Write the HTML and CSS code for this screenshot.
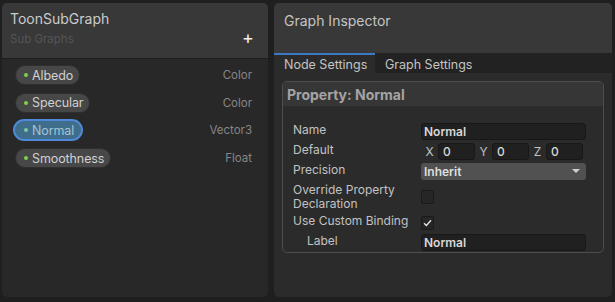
FILE: index.html
```html
<!DOCTYPE html>
<html>
  <head>
    <link rel="stylesheet" href="styles.css">
  </head>
  <body>
    <div class="window">
      <div class="blackboard">
        <div class="bb-header">
          <div class="bb-title">ToonSubGraph</div>
          <div class="bb-sub">
            <span>Sub Graphs</span>
            <span class="add-button">+</span>
          </div>
        </div>
        <div class="bb-list">
          <div class="bb-row">
            <div class="pill"><span class="dot"></span>Albedo</div>
            <div class="bb-type">Color</div>
          </div>
          <div class="bb-row">
            <div class="pill"><span class="dot"></span>Specular</div>
            <div class="bb-type">Color</div>
          </div>
          <div class="bb-row">
            <div class="pill selected"><span class="dot"></span>Normal</div>
            <div class="bb-type">Vector3</div>
          </div>
          <div class="bb-row">
            <div class="pill"><span class="dot"></span>Smoothness</div>
            <div class="bb-type">Float</div>
          </div>
        </div>
      </div>

      <div class="inspector">
        <div class="insp-header">Graph Inspector</div>
        <div class="tabs">
          <div class="tab active">Node Settings</div>
          <div class="tab">Graph Settings</div>
        </div>
        <div class="insp-body">
          <div class="prop-box">
            <div class="prop-title">Property: Normal</div>
            <div class="prop-grid">
              <div class="label">Name</div>
              <div class="field-cell"><div class="field">Normal</div></div>

              <div class="label">Default</div>
              <div class="field-cell vec">
                <span class="axis">X</span><div class="field small">0</div>
                <span class="axis">Y</span><div class="field small">0</div>
                <span class="axis">Z</span><div class="field small">0</div>
              </div>

              <div class="label">Precision</div>
              <div class="field-cell">
                <div class="dropdown">Inherit<span class="arrow"></span></div>
              </div>

              <div class="label two-line">Override Property<br>Declaration</div>
              <div class="field-cell"><div class="checkbox"></div></div>

              <div class="label">Use Custom Binding</div>
              <div class="field-cell">
                <div class="checkbox">
                  <svg width="9" height="8" viewBox="0 0 9 8"><path d="M1 4.2 L3.4 6.5 L8 1.3" fill="none" stroke="#e6e6e6" stroke-width="1.3"/></svg>
                </div>
              </div>

              <div class="label indent">Label</div>
              <div class="field-cell"><div class="field">Normal</div></div>
            </div>
          </div>
        </div>
      </div>
    </div>
  </body>
</html>
```

FILE: styles.css
```css
body {
    margin: 0;
    background-color: #1f1f1f;
    font-family: 'Inter', 'Noto Sans', sans-serif;
    color: #c4c4c4;
}
.window {
    display: flex;
    gap: 6px;
    padding: 3px 3px 5px 2px;
    height: 294px;
}

/* left: blackboard */
.blackboard {
    width: 266px;
    background-color: #282828;
    border-radius: 5px;
    overflow: hidden;
    display: flex;
    flex-direction: column;
}
.bb-header {
    height: 56px;
    background-color: #383838;
    border-bottom: 1px solid #1d1d1d;
    padding: 0 14px 0 8px;
    box-sizing: border-box;
}
.bb-title {
    font-size: 14px;
    padding-top: 6px;
    height: 20px;
    line-height: 20px;
    color: #cbcbcb;
}
.bb-sub {
    display: flex;
    justify-content: space-between;
    align-items: center;
    font-size: 11.5px;
    color: #555555;
    margin-top: 3px;
}
.add-button {
    color: #f0f0f0;
    font-size: 18px;
    line-height: 16px;
    margin-top: -3px;
}
.bb-list {
    padding: 6px 16px 0 11px;
}
.bb-row {
    height: 27.7px;
    display: flex;
    justify-content: space-between;
    align-items: flex-start;
}
.pill {
    height: 20px;
    box-sizing: border-box;
    margin-left: 2px;
    padding: 0 6px 0 8px;
    display: flex;
    align-items: center;
    gap: 4px;
    background-color: #474747;
    border: 1px solid #2f2f2f;
    border-radius: 10px;
    font-size: 12.5px;
    letter-spacing: -0.1px;
    color: #d0d0d0;
    white-space: nowrap;
}
.pill .dot {
    width: 4px;
    height: 4px;
    border-radius: 50%;
    background-color: #7ed04b;
}
.pill.selected {
    height: 22px;
    margin-left: 0;
    margin-top: -1px;
    padding: 0 7px 0 9px;
    background-color: #3f6d8c;
    border: 2px solid #4f88d6;
    border-radius: 11px;
    color: #a3c3d6;
}
.pill.selected .dot {
    background-color: #7ec8a0;
}
.bb-type {
    font-size: 11.5px;
    color: #868686;
    line-height: 20px;
}

/* right: inspector */
.inspector {
    flex: 1;
    background-color: #2b2b2b;
    border-radius: 5px;
    overflow: hidden;
    display: flex;
    flex-direction: column;
}
.insp-header {
    height: 50px;
    background-color: #383838;
    font-size: 14px;
    color: #c4c4c4;
    padding: 9px 0 0 10px;
    box-sizing: border-box;
}
.tabs {
    display: flex;
    height: 20px;
    background-color: #222222;
}
.tab {
    font-size: 12.5px;
    line-height: 17px;
    padding: 1px 10px 0 10px;
    color: #c4c4c4;
    border-top: 2px solid transparent;
    white-space: nowrap;
}
.tab.active {
    width: 101px;
    box-sizing: border-box;
    background-color: #2b2b2b;
    border-top-color: #3a7ac4;
}
.insp-body {
    padding: 8px 8px 0 8px;
}
.prop-box {
    border: 1px solid #4e4e4e;
    border-radius: 5px;
    overflow: hidden;
}
.prop-title {
    height: 24px;
    line-height: 25px;
    background-color: #363636;
    font-weight: bold;
    font-size: 14px;
    color: #a4a4a4;
    padding-left: 4px;
    margin-bottom: 15px;
}
.prop-grid {
    display: grid;
    grid-template-columns: 128px 1fr;
    grid-template-rows: 20px 20px 20px 32px 19px 20px;
    padding: 0 17px 0 10px;
}
.label {
    font-size: 12px;
    color: #c2c2c2;
    display: flex;
    align-items: center;
    line-height: 14px;
    margin-top: -3px;
}
.label.two-line {
    margin-top: 0;
}
.label.indent {
    padding-left: 14px;
}
.field-cell {
    display: flex;
    align-items: center;
}
.field {
    flex: 1;
    height: 17px;
    box-sizing: border-box;
    background-color: #202020;
    border: 1px solid #181818;
    border-radius: 3px;
    font-size: 12px;
    font-weight: 600;
    color: #d8d8d8;
    padding-left: 2px;
    line-height: 15px;
}
.axis {
    font-size: 12px;
    color: #c2c2c2;
    width: 17px;
    text-align: center;
}
.field.small {
    flex: 0 0 37px;
    padding-left: 4px;
    font-weight: 500;
}
.dropdown {
    flex: 1;
    height: 17px;
    background-color: #515151;
    border-radius: 3px;
    font-size: 12px;
    font-weight: 600;
    color: #dedede;
    padding-left: 3px;
    line-height: 17px;
    display: flex;
    justify-content: space-between;
    align-items: center;
}
.arrow {
    width: 0;
    height: 0;
    border-left: 4px solid transparent;
    border-right: 4px solid transparent;
    border-top: 4px solid #cfcfcf;
    margin-right: 6px;
}
.checkbox {
    width: 13px;
    height: 14px;
    box-sizing: border-box;
    background-color: #262626;
    border: 1px solid #1a1a1a;
    border-radius: 2px;
    display: flex;
    align-items: center;
    justify-content: center;
}
.checkbox svg {
    display: block;
}
```
